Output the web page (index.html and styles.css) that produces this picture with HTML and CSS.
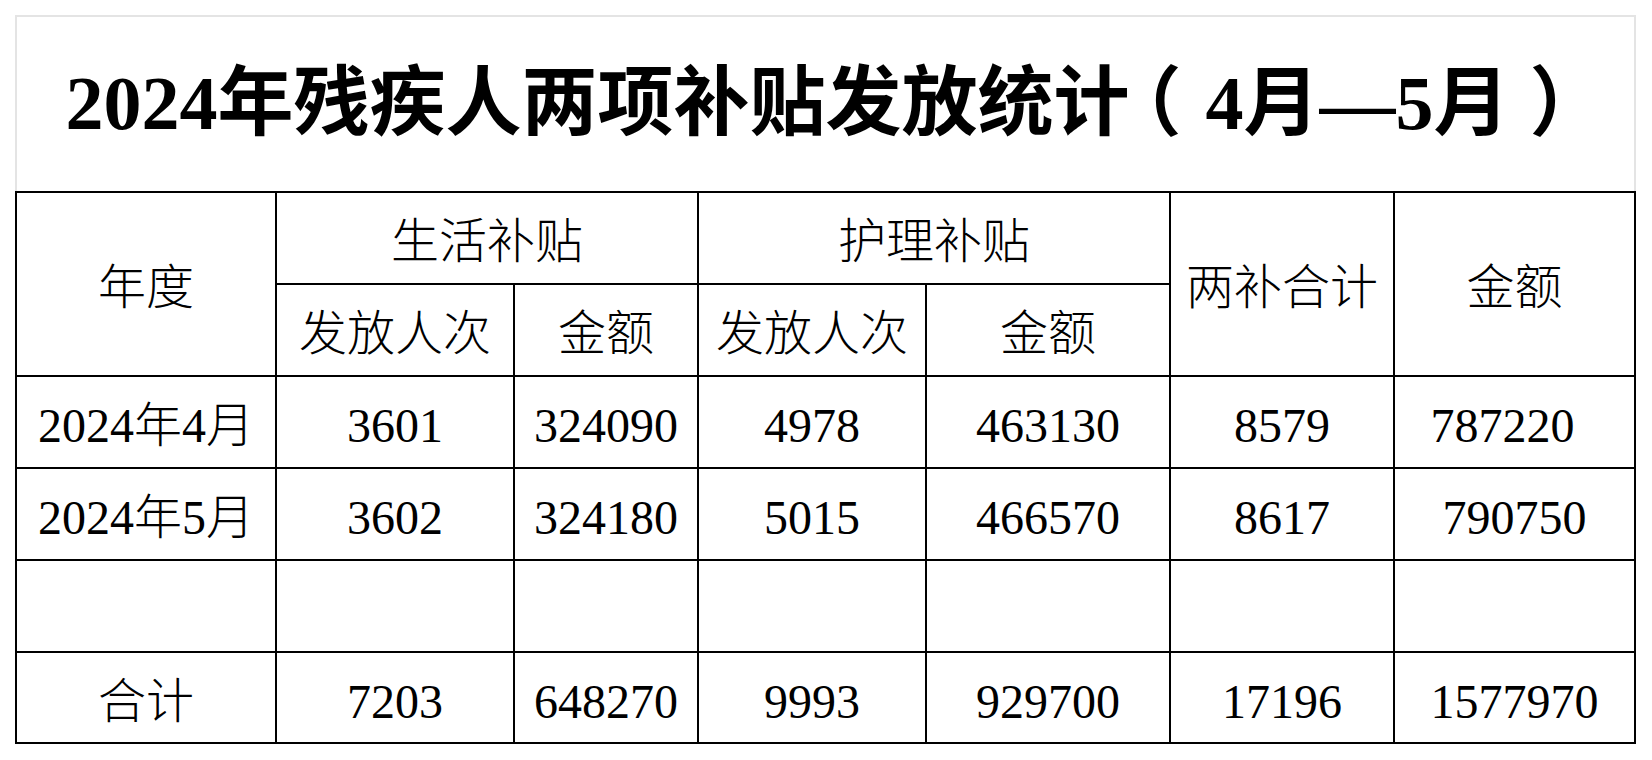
FILE: index.html
```html
<!DOCTYPE html>
<html lang="zh-CN">
<head>
<meta charset="utf-8">
<title>2024年残疾人两项补贴发放统计</title>
<link rel="stylesheet" href="styles.css">
</head>
<body>
<div class="sheet">
  <div class="title">2024年残疾人两项补贴发放统计<span class="paren-open">（</span>4月—5月<span class="paren-close">）</span></div>
  <table class="grid">
    <colgroup>
      <col class="c-year">
      <col class="c-a">
      <col class="c-b">
      <col class="c-c">
      <col class="c-d">
      <col class="c-e">
      <col class="c-f">
    </colgroup>
    <tr>
      <td rowspan="2">年度</td>
      <td colspan="2">生活补贴</td>
      <td colspan="2">护理补贴</td>
      <td rowspan="2">两补合计</td>
      <td rowspan="2">金额</td>
    </tr>
    <tr>
      <td>发放人次</td>
      <td>金额</td>
      <td>发放人次</td>
      <td>金额</td>
    </tr>
    <tr>
      <td>2024年4月</td>
      <td>3601</td>
      <td>324090</td>
      <td>4978</td>
      <td>463130</td>
      <td>8579</td>
      <td class="trail">787220</td>
    </tr>
    <tr>
      <td>2024年5月</td>
      <td>3602</td>
      <td>324180</td>
      <td>5015</td>
      <td>466570</td>
      <td>8617</td>
      <td>790750</td>
    </tr>
    <tr>
      <td></td>
      <td></td>
      <td></td>
      <td></td>
      <td></td>
      <td></td>
      <td></td>
    </tr>
    <tr class="last">
      <td>合计</td>
      <td>7203</td>
      <td>648270</td>
      <td>9993</td>
      <td>929700</td>
      <td>17196</td>
      <td>1577970</td>
    </tr>
  </table>
</div>
</body>
</html>
```
FILE: styles.css
```css
html, body {
  margin: 0;
  padding: 0;
  background: #ffffff;
}

.sheet {
  margin: 15px 0 0 15px;
  width: 1621px;
}

.title {
  height: 176px;
  box-sizing: border-box;
  border: 2px solid #e4e4e4;
  border-bottom: 0;
  display: flex;
  align-items: center;
  justify-content: center;
  font-family: "Liberation Serif", "Noto Sans CJK SC", serif;
  font-weight: bold;
  font-size: 76px;
  line-height: 1.2;
  color: #000;
  white-space: nowrap;
}

.paren-open {
  display: inline-block;
  font-feature-settings: "halt" 1;
  margin-left: 14px;
  margin-right: 24px;
}

.paren-close {
  display: inline-block;
  margin-left: 20px;
  margin-right: -20px;
}

.grid {
  border-collapse: collapse;
  table-layout: fixed;
  width: 1621px;
  font-family: "Liberation Serif", "Noto Sans CJK SC", serif;
  font-size: 48px;
  font-weight: 300;
  line-height: 1.2;
  color: #000;
}

.grid tr {
  height: 92px;
}

.grid tr.last {
  height: 91px;
}

.grid td {
  border: 2px solid #000;
  padding: 8px 0 0 0;
  text-align: center;
  vertical-align: middle;
  white-space: nowrap;
}

.grid td.trail {
  padding-right: 24px;
}

.c-year { width: 260px; }
.c-a { width: 238px; }
.c-b { width: 184px; }
.c-c { width: 228px; }
.c-d { width: 244px; }
.c-e { width: 224px; }
.c-f { width: 241px; }
```
